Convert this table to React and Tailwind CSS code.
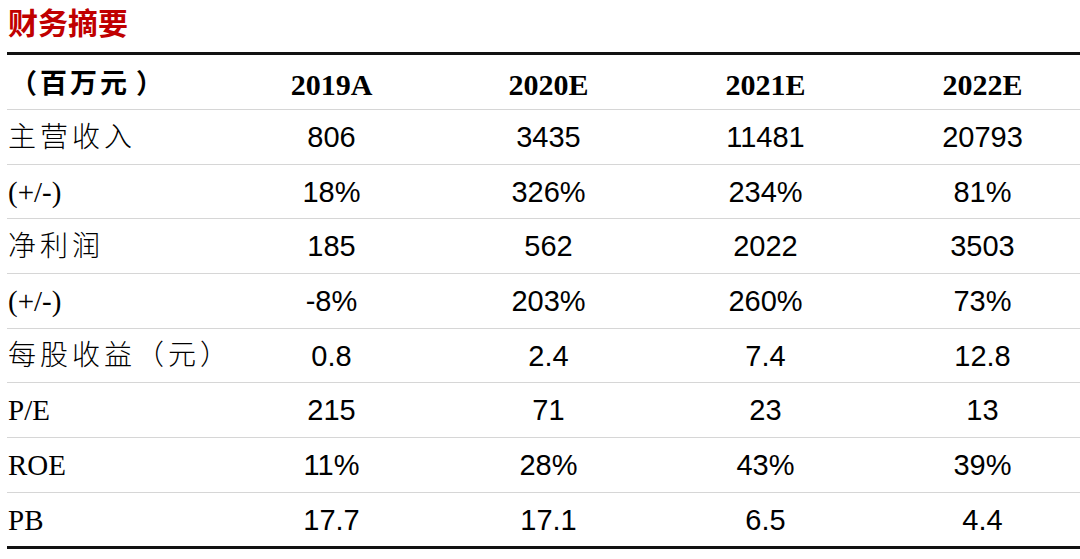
import React from "react";

const rows = [
  { label: "主营收入", cjk: true, v: ["806", "3435", "11481", "20793"], h: "h-[55px]" },
  { label: "(+/-)", v: ["18%", "326%", "234%", "81%"], h: "h-[54px]" },
  { label: "净利润", cjk: true, v: ["185", "562", "2022", "3503"], h: "h-[55px]" },
  { label: "(+/-)", v: ["-8%", "203%", "260%", "73%"], h: "h-[55px]" },
  { label: "每股收益（元）", cjk: true, v: ["0.8", "2.4", "7.4", "12.8"], h: "h-[54px]" },
  { label: "P/E", v: ["215", "71", "23", "13"], h: "h-[55px]" },
  { label: "ROE", v: ["11%", "28%", "43%", "39%"], h: "h-[55px]" },
  { label: "PB", v: ["17.7", "17.1", "6.5", "4.4"], h: "h-[53px]", last: true },
];

export default function App() {
  return (
    <div className="w-[1080px] h-[559px] overflow-hidden bg-white text-black">
      <div className="h-[52px] pl-[8px] pt-[1px] text-[30px] leading-[40px] font-bold text-[#c00000] font-['Noto_Sans_CJK_SC',sans-serif]">
        财务摘要
      </div>
      <div className="ml-[7px] w-[1084px] border-t-[3px] border-b-[3px] border-[#111111]">
        <div className="h-[55px] grid grid-cols-[216px_217px_217px_217px_217px] items-center border-b border-[#d6d6d6]">
          <div className="pl-[3px] pt-[5px] text-[27px] font-bold tracking-[3px] whitespace-nowrap font-['Liberation_Serif','Noto_Sans_CJK_SC',serif]">
            （百万元<span className="ml-[6px]">）</span>
          </div>
          {["2019A", "2020E", "2021E", "2022E"].map((y) => (
            <div
              key={y}
              className="text-center text-[30px] font-bold pt-[5px] font-['Liberation_Serif',serif]"
            >
              {y}
            </div>
          ))}
        </div>
        {rows.map((r, i) => (
          <div
            key={i}
            className={`${r.h} grid grid-cols-[216px_217px_217px_217px_217px] items-center ${
              r.last ? "" : "border-b border-[#d6d6d6]"
            }`}
          >
            {r.cjk ? (
              <div className="pl-[1px] pt-[1px] text-[28px] font-light tracking-[4px] whitespace-nowrap font-['Liberation_Serif','Noto_Sans_CJK_SC',sans-serif]">
                {r.label}
              </div>
            ) : (
              <div className="pl-[1px] pt-[2px] text-[29px] font-['Liberation_Serif',serif]">
                {r.label}
              </div>
            )}
            {r.v.map((v, j) => (
              <div
                key={j}
                className="text-center text-[29px] pt-[2px] font-['Liberation_Sans',Arial,sans-serif]"
              >
                {v}
              </div>
            ))}
          </div>
        ))}
      </div>
    </div>
  );
}
